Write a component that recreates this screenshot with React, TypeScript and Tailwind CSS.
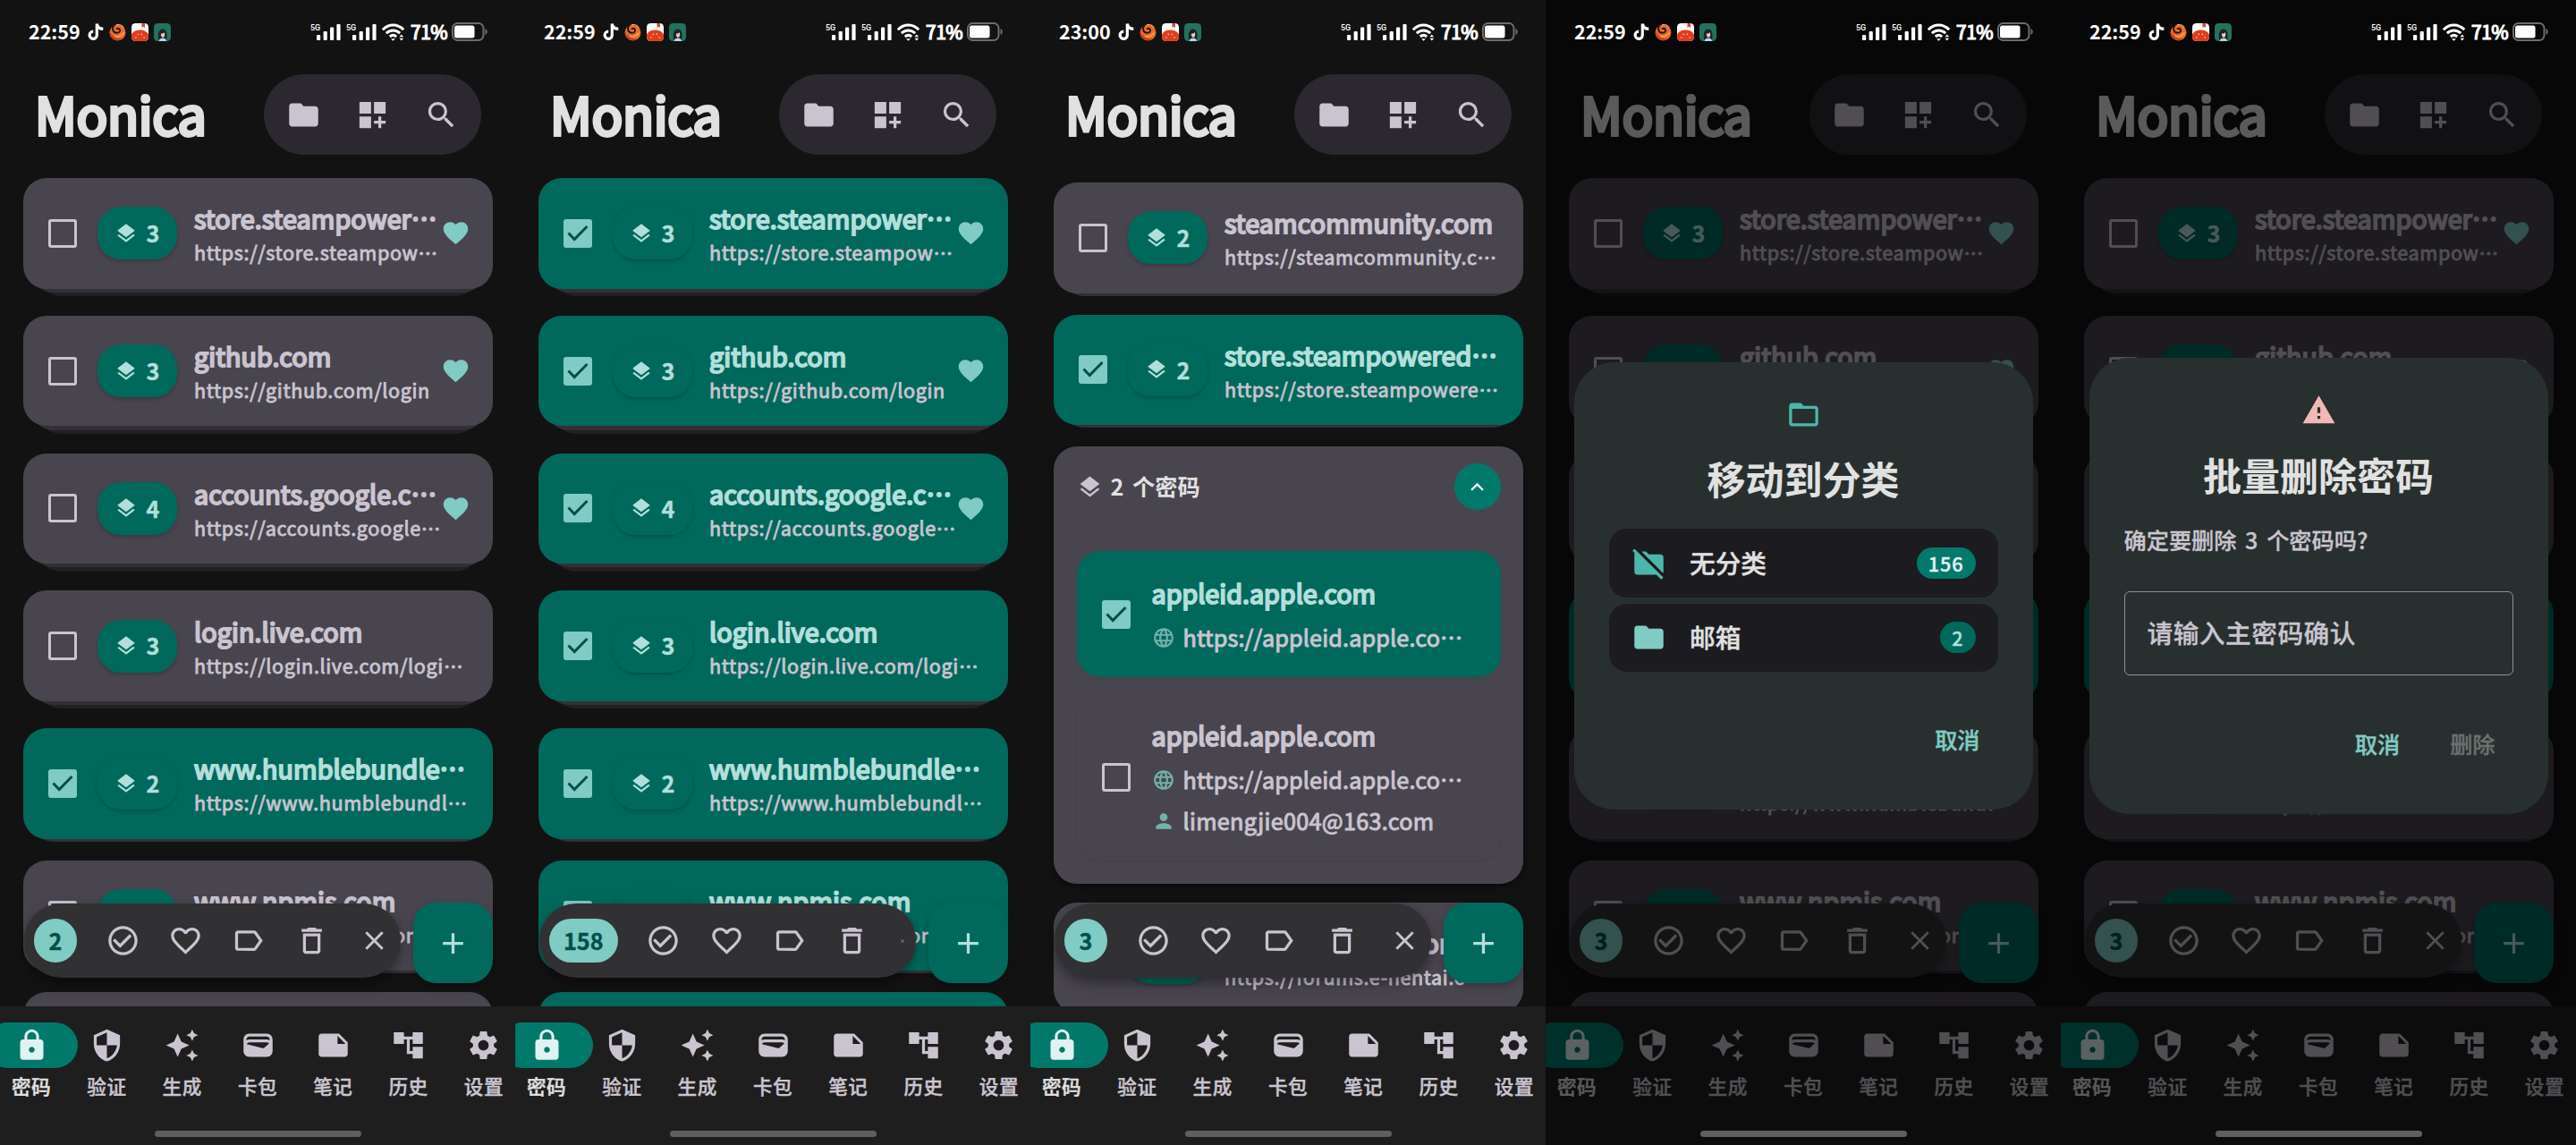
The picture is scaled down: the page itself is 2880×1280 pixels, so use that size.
import React from "react";
import clsx from "clsx";
import {
  MdAccountTree,
  MdAdd,
  MdAutoAwesome,
  MdCheckCircleOutline,
  MdClose,
  MdDashboardCustomize,
  MdDeleteOutline,
  MdFavorite,
  MdFavoriteBorder,
  MdFolder,
  MdFolderOff,
  MdFolderOpen,
  MdKeyboardArrowUp,
  MdLabelOutline,
  MdLanguage,
  MdLayers,
  MdLock,
  MdNote,
  MdPerson,
  MdSearch,
  MdSecurity,
  MdSettings,
  MdWallet,
  MdWarning,
} from "react-icons/md";

interface PasswordGroup {
  title: string;
  url: string;
  count: number;
  favorite?: boolean;
  selected?: boolean;
}

const groups: PasswordGroup[] = [
  { title: "store.steampower…", url: "https://store.steampow…", count: 3, favorite: true },
  { title: "github.com", url: "https://github.com/login", count: 3, favorite: true },
  { title: "accounts.google.c…", url: "https://accounts.google…", count: 4, favorite: true },
  { title: "login.live.com", url: "https://login.live.com/logi…", count: 3 },
  { title: "www.humblebundle…", url: "https://www.humblebundl…", count: 2 },
  { title: "www.npmjs.com", url: "https://www.npmjs.com", count: 2 },
  { title: "www.paypal.com", url: "https://www.paypal.com", count: 2 },
];

const selectOnly = (indexes: number[]) =>
  groups.map((group, i) => ({ ...group, selected: indexes.includes(i) }));

const tabs = [
  { label: "密码", icon: MdLock },
  { label: "验证", icon: MdSecurity },
  { label: "生成", icon: MdAutoAwesome },
  { label: "卡包", icon: MdWallet },
  { label: "笔记", icon: MdNote },
  { label: "历史", icon: MdAccountTree },
  { label: "设置", icon: MdSettings },
];

const Signal: React.FC = () => (
  <svg width="34" height="20" viewBox="0 0 34 20" fill="#fff">
    <text x="0" y="8" fontSize="9" fontWeight="500" fontFamily="Roboto, sans-serif">
      5G
    </text>
    <rect x="7" y="13" width="4.2" height="6" rx="1" />
    <rect x="14.6" y="9" width="4.2" height="10" rx="1" />
    <rect x="22" y="4.5" width="4.2" height="14.5" rx="1" />
    <rect x="29.4" y="1" width="4.2" height="18" rx="1" />
  </svg>
);

const StatusBar: React.FC<{ time: string }> = ({ time }) => (
  <div className="relative z-30 flex h-[71px] items-center pl-[32px] pr-[30px] text-white">
    <span className="w-[57px] whitespace-nowrap pb-px text-[21.5px] font-bold leading-none">
      {time}
    </span>
    <svg className="ml-[9px]" width="18" height="20" viewBox="0 0 18 20">
      <path
        d="M10.300 .5v13a4.100 4.100 0 1 1-4.100-4.300M10.300 .5c.3 3.700 3 5.700 7 5.900"
        fill="none"
        stroke="#fff"
        strokeWidth="3.200"
      />
    </svg>
    <svg className="ml-1.5" width="19" height="20" viewBox="0 0 19 20">
      <circle cx="9.5" cy="10.5" r="9" fill="#ea6a2c" />
      <path d="M.8 9C3 15 8 18 15 17.200 9 21.500 1 18 .8 9z" fill="#c23a20" />
      <path
        d="M6 1.800C2.500 5 4 10.500 8.500 10.800c3.500 0 4.700-3 2.600-4.700-1.200-.8-2.700-.3-2.700 1"
        fill="none"
        stroke="#20150f"
        strokeWidth="1.900"
      />
      <path d="M8 1.800c3.500-1 7 .5 8.200 3.700" fill="none" stroke="#f6b25c" strokeWidth="1.200" />
      <path d="M6 14.500c4 1 8-.5 10.500-4" fill="none" stroke="#f6a24c" strokeWidth="1.800" />
    </svg>
    <svg className="ml-[6px]" width="19" height="20" viewBox="0 0 19 20">
      <rect width="19" height="20" rx="4.500" fill="#fff" />
      <path
        d="M0 12.500C2 8.500 6 7.500 9.500 7.500S17 8.500 19 12.500v3a4.500 4.500 0 0 1-4.500 4.500h-10A4.500 4.500 0 0 1 0 15.500z"
        fill="#dd3f1f"
      />
      <path d="M11.500 0H15v5l-1.700-1.300L11.500 5z" fill="#d9463a" />
      <path
        d="M4.500 16.500l.8-1.200M7 13l.5-1.300M11.500 13l-.3-1.300M14.500 16.500l-.8-1.200"
        stroke="#ffd9c8"
        strokeWidth="1.200"
      />
    </svg>
    <svg className="ml-[6px]" width="19" height="20" viewBox="0 0 19 20">
      <rect width="19" height="20" rx="4.500" fill="#23735a" />
      <path d="M5.500 19.500C3.500 12 5.500 6.500 9.800 6.500s5.700 5 4.200 13z" fill="#1c2433" />
      <path
        d="M8 11.500c1.500.3 3-.4 3.800-1.500.9 3 .3 5.500-1.500 6C8.500 16 7.600 13.500 8 11.500z"
        fill="#f0c9b4"
      />
      <path d="M5.500 20c.6-2.500 2.500-3.400 4.500-3.400s3.600 1 4.200 3.400z" fill="#b9d5e6" />
    </svg>
    <div className="ml-auto flex items-center gap-[6px]">
      <Signal />
      <Signal />
      <svg width="26" height="20" viewBox="0 0 26 20" fill="none" stroke="#fff" strokeWidth="3">
        <path d="M.8 7.200C7.800 .4 17.200 .4 24.200 7.200" />
        <path d="M4.800 11.200c4.600-4.200 10.800-4.200 15.400 0" />
        <path d="M8.800 15c2.300-2 5.100-2 7.400 0" />
        <path d="M12.500 19.800l-2.400-2.600h4.800z" fill="#fff" stroke="none" />
        <path d="M21.800 12.500l2.300 2.800h-4.600zM21.800 19.500l2.300-2.800h-4.600z" fill="#fff" stroke="none" />
      </svg>
      <span className="w-10 whitespace-nowrap pb-px text-[21px] leading-none tracking-[-0.500px] [-webkit-text-stroke:1.200px]">
        71%
      </span>
      <svg width="41" height="21" viewBox="0 0 41 21">
        <rect x="1" y="1" width="34.500" height="19" rx="5.500" fill="none" stroke="#6d6d6d" strokeWidth="2" />
        <rect x="3" y="3.500" width="22.500" height="14" rx="2.500" fill="#fff" />
        <path d="M37.500 7c3 1.500 3 5.500 0 7z" fill="#6d6d6d" />
      </svg>
    </div>
  </div>
);

const Header: React.FC = () => (
  <div className="mt-3 flex h-[90px] items-center justify-between pl-[39px] pr-[38px]">
    <h1 className="pb-[3px] text-[57.500px] leading-none tracking-[-0.300px] text-[#e1e1e1] [-webkit-text-stroke:3.800px]">
      Monica
    </h1>
    <div className="flex h-full w-[243px] items-center justify-between rounded-full bg-[#2b292f] px-[25px] text-[39px] text-[#cac4d0]">
      <MdFolder />
      <MdDashboardCustomize />
      <MdSearch />
    </div>
  </div>
);

const Checkbox: React.FC<{ checked?: boolean }> = ({ checked }) =>
  checked ? (
    <div className="flex size-8 shrink-0 items-center justify-center rounded-[3px] bg-[#80cbc4]">
      <svg width="24" height="20" viewBox="0 0 24 20" fill="none" stroke="#00504a" strokeWidth="3">
        <path d="M1.500 9.500l6.700 7L22.500 2" />
      </svg>
    </div>
  ) : (
    <div className="size-8 shrink-0 rounded-[3px] border-[3px] border-[#cac4d0]" />
  );

const GroupCard: React.FC<{ group: PasswordGroup }> = ({ group }) => {
  const { title, url, count, favorite, selected } = group;
  const deep = count > 2;

  return (
    <div className={clsx("relative shrink-0", deep ? "h-[132.750px]" : "h-[126.500px]")}>
      {deep && (
        <div className="absolute inset-x-[16px] bottom-[0.750px] h-16 rounded-[26px] bg-[#212023]" />
      )}
      <div
        className={clsx(
          "absolute inset-x-[8px] h-16 rounded-[26px] bg-[#323036]",
          deep ? "bottom-[5px]" : "bottom-0"
        )}
      />
      <div
        className={clsx(
          "relative flex h-[123.500px] items-center rounded-[26px] pl-[28px] pr-[25px]",
          selected ? "bg-[#00695c]" : "bg-[#49454f]"
        )}
      >
        <Checkbox checked={selected} />
        <div className="ml-[22.500px] flex h-[59px] w-[89px] shrink-0 items-center justify-center gap-[10px] rounded-[26px] bg-[#00695c] text-[#b2dfdb] shadow-[0_2px_4px_rgba(0,0,0,0.22)]">
          <MdLayers className="text-[26px]" />
          <span className="text-[25.200px] font-bold leading-none [-webkit-text-stroke:0.400px]">
            {count}
          </span>
        </div>
        <div className="ml-[19.500px] min-w-0 flex-1 whitespace-nowrap">
          <p
            className={clsx(
              "text-[28.700px] leading-[40px] tracking-[0.080px] [-webkit-text-stroke:2px]",
              selected ? "text-[#b2dfdb]" : "text-[#cac4d0]"
            )}
          >
            {title}
          </p>
          <p className="mt-[3px] text-[21.600px] leading-[30px] tracking-[0.620px] text-[#cac4d0] [-webkit-text-stroke:0.850px]">
            {url}
          </p>
        </div>
        {favorite && <MdFavorite className="shrink-0 text-[33px] text-[#80cbc4]" />}
      </div>
    </div>
  );
};

interface EntryProps {
  selected?: boolean;
  account?: string;
}

const Entry: React.FC<EntryProps> = ({ selected, account }) => (
  <div
    className={clsx(
      "flex items-center rounded-[26px] pl-7 shadow-[0_1px_3px_rgba(0,0,0,0.080)]",
      selected ? "bg-[#00695c]" : "bg-[#49454f]",
      account ? "h-[187px]" : "h-[141px]"
    )}
  >
    <Checkbox checked={selected} />
    <div className="ml-[24px] whitespace-nowrap">
      <p
        className={clsx(
          "text-[28.700px] leading-[42px] [-webkit-text-stroke:2px]",
          selected ? "text-[#b2dfdb]" : "text-[#cac4d0]"
        )}
      >
        appleid.apple.com
      </p>
      <div className="mt-[11px] flex h-9 items-center gap-[9px] text-[25.200px] tracking-[0.150px] text-[#cac4d0] [-webkit-text-stroke:1px]">
        <MdLanguage className="text-[26px] text-[#72b2ab]" strokeWidth={0} />
        https://appleid.apple.co…
      </div>
      {account && (
        <div className="mt-[10px] flex h-9 items-center gap-[9px] text-[25.200px] tracking-[0.300px] text-[#cac4d0] [-webkit-text-stroke:1px]">
          <MdPerson className="text-[26px] text-[#72b2ab]" />
          {account}
        </div>
      )}
    </div>
  </div>
);

const ExpandedCard: React.FC = () => (
  <div className="h-[488.500px] shrink-0 rounded-[26px] bg-[#49454f] px-[25.500px] shadow-[0_3px_8px_rgba(0,0,0,0.400)]">
    <div className="flex h-[90px] items-center">
      <MdLayers className="text-[29px] text-[#cac4d0]" />
      <span className="ml-[9px] text-[25.200px] font-bold text-[#e1e1e1] [word-spacing:4px]">
        2 个密码
      </span>
      <div className="ml-auto flex size-[52px] items-center justify-center rounded-full bg-[#00796b]">
        <MdKeyboardArrowUp className="text-[29px] text-white" />
      </div>
    </div>
    <div className="mt-[27px] flex flex-col gap-[18px]">
      <Entry selected />
      <Entry account="limengjie004@163.com" />
    </div>
  </div>
);

const SelectionBar: React.FC<{ count: number }> = ({ count }) => (
  <div className="absolute bottom-[187px] left-[27px] z-10 flex h-[83px] w-[421px] items-center rounded-full bg-[#313033] pl-[11px] text-[39px] text-[#cac4d0] shadow-[0_6px_14px_rgba(0,0,0,0.400)]">
    <div className="mr-4 flex h-[49px] min-w-12 items-center justify-center rounded-full bg-[#80cbc4] px-[16px] text-[25.200px] font-bold leading-none text-[#00504a] [-webkit-text-stroke:0.400px]">
      {count}
    </div>
    {[MdCheckCircleOutline, MdFavoriteBorder, MdLabelOutline, MdDeleteOutline].map((Icon, i) => (
      <div key={i} className="flex w-[70.400px] shrink-0 justify-center">
        <Icon />
      </div>
    ))}
    <div className="flex flex-1 justify-center pl-[5px]">
      <MdClose className={clsx("shrink-0", count > 99 ? "text-[6px]" : "text-[35px]")} />
    </div>
  </div>
);

const NavBar: React.FC = () => (
  <nav className="relative z-10 flex h-[155px] shrink-0 flex-col items-center bg-[#1e1e1e]">
    <div className="flex pt-[18px]">
      {tabs.map(({ label, icon: Icon }, i) => (
        <div key={label} className="flex w-[84.300px] shrink-0 flex-col items-center">
          <div
            className={clsx(
              "flex h-[51px] w-[104px] shrink-0 items-center justify-center rounded-full text-[39px]",
              i === 0 ? "bg-[#00796b] text-[#e0f2f1]" : "text-[#cac4d0]"
            )}
          >
            <Icon />
          </div>
          <span
            className={clsx(
              "mt-[5px] text-[21.600px] font-medium leading-[29px] tracking-[0.500px] [-webkit-text-stroke:0.400px]",
              i === 0 ? "text-[#e1e1e1]" : "text-[#cac4d0]"
            )}
          >
            {label}
          </span>
        </div>
      ))}
    </div>
  </nav>
);

const Dialog: React.FC<{ className: string; children: React.ReactNode }> = ({
  className,
  children,
}) => (
  <div className="absolute inset-0 z-20 flex items-start justify-center bg-black/60">
    <div
      className={clsx(
        "flex w-[513px] flex-col items-center rounded-[45px] bg-[#28302f] px-[39px] pt-[39px]",
        className
      )}
    >
      {children}
    </div>
  </div>
);

const CategoryRow: React.FC<{
  icon: React.ReactNode;
  label: string;
  badge: React.ReactNode;
}> = ({ icon, label, badge }) => (
  <div className="flex h-[76.500px] items-center rounded-[20px] bg-[#1c1b1f] pl-[25.500px] pr-[25px]">
    {icon}
    <span className="-mt-0.5 ml-[26px] text-[28.700px] font-medium text-[#e1e1e1] [-webkit-text-stroke:0.400px]">
      {label}
    </span>
    {badge}
  </div>
);

const MoveDialog: React.FC = () => (
  <Dialog className="mt-[405px] h-[500px]">
    <MdFolderOpen className="text-[39px] text-[#4db6ac]" />
    <h2 className="mt-[23px] text-[43px] font-bold leading-[57px] text-[#e1e1e1]">移动到分类</h2>
    <div className="mt-[28px] flex w-full flex-col gap-[7px]">
      <CategoryRow
        icon={<MdFolderOff className="text-[39px] text-[#4db6ac]" />}
        label="无分类"
        badge={
          <span className="ml-auto rounded-full bg-[#00796b] px-[13px] text-[21.600px] font-medium leading-[35px] tracking-[0.900px] text-[#e0f2f1] [-webkit-text-stroke:0.400px]">
            156
          </span>
        }
      />
      <CategoryRow
        icon={<MdFolder className="text-[39px] text-[#80cbc4]" />}
        label="邮箱"
        badge={
          <span className="ml-auto rounded-full bg-[#00695c] px-[13px] text-[21.600px] font-medium leading-[35px] tracking-[0.900px] text-[#b2dfdb] [-webkit-text-stroke:0.400px]">
            2
          </span>
        }
      />
    </div>
    <button className="mt-[56px] self-end pr-[20px] text-[25.200px] font-medium leading-[38px] text-[#80cbc4] [-webkit-text-stroke:0.400px]">
      取消
    </button>
  </Dialog>
);

const DeleteDialog: React.FC = () => (
  <Dialog className="mt-[400px] h-[510px]">
    <MdWarning className="text-[39px] text-[#f2b8b5]" />
    <h2 className="mt-[24px] text-[43px] font-bold leading-[57px] text-[#e1e1e1]">批量删除密码</h2>
    <p className="mt-[26px] self-start text-[25.200px] font-medium leading-[36px] text-[#cac4d0] [-webkit-text-stroke:0.300px] [word-spacing:4px]">
      确定要删除 3 个密码吗?
    </p>
    <div className="mt-[40px] flex h-[94px] w-full items-center rounded-[6px] border-[1.500px] border-[#8d9291] pb-[2px] pl-[25px] text-[28.700px] font-medium tracking-[0.500px] text-[#cac4d0] [-webkit-text-stroke:0.300px]">
      请输入主密码确认
    </div>
    <div className="mt-[57px] flex gap-[56px] self-end pr-[20px] text-[25.200px] font-medium leading-[38px] [-webkit-text-stroke:0.400px]">
      <button className="text-[#80cbc4]">取消</button>
      <button className="text-[#6b7170]">删除</button>
    </div>
  </Dialog>
);

interface PhoneProps {
  time?: string;
  count: number;
  listClassName?: string;
  dialog?: React.ReactNode;
  children: React.ReactNode;
}

const Phone: React.FC<PhoneProps> = ({
  time = "22:59",
  count,
  listClassName = "pt-[26px]",
  dialog,
  children,
}) => (
  <div className="relative flex h-[1280px] w-[576px] shrink-0 flex-col overflow-hidden bg-[#121212]">
    <StatusBar time={time} />
    <Header />
    <div
      className={clsx(
        "flex min-h-0 flex-1 flex-col gap-[21px] overflow-hidden pl-[26px] pr-[25px]",
        listClassName
      )}
    >
      {children}
    </div>
    <NavBar />
    <SelectionBar count={count} />
    <div className="absolute bottom-[181px] right-[25px] z-10 flex h-[90px] w-[89px] items-center justify-center rounded-[26px] bg-[#00695c] text-[39px] text-[#b2dfdb] shadow-[0_4px_10px_rgba(0,0,0,0.250)]">
      <MdAdd />
    </div>
    {dialog}
    <div className="absolute bottom-[9px] left-[173px] z-30 h-[7px] w-[231px] rounded-full bg-[#5f5f5f]" />
  </div>
);

const GroupList: React.FC<{ items: PasswordGroup[] }> = ({ items }) => (
  <>
    {items.map((group) => (
      <GroupCard key={group.title} group={group} />
    ))}
  </>
);

export default function App() {
  return (
    <div
      lang="zh-CN"
      className="flex w-[2880px] bg-[#121212] font-['Noto_Sans_CJK_SC',sans-serif]"
    >
      <Phone count={2}>
        <GroupList items={selectOnly([4])} />
      </Phone>
      <Phone count={158}>
        <GroupList items={selectOnly([0, 1, 2, 3, 4, 5, 6])} />
      </Phone>
      <Phone time="23:00" count={3} listClassName="pt-[31px]">
        <GroupCard
          group={{ title: "steamcommunity.com", url: "https://steamcommunity.c…", count: 2 }}
        />
        <GroupCard
          group={{
            title: "store.steampowered…",
            url: "https://store.steampowere…",
            count: 2,
            selected: true,
          }}
        />
        <ExpandedCard />
        <GroupCard
          group={{ title: "forums.e-hentai.org", url: "https://forums.e-hentai.o…", count: 2 }}
        />
      </Phone>
      <Phone count={3} dialog={<MoveDialog />}>
        <GroupList items={selectOnly([3])} />
      </Phone>
      <Phone count={3} dialog={<DeleteDialog />}>
        <GroupList items={selectOnly([3])} />
      </Phone>
    </div>
  );
}
